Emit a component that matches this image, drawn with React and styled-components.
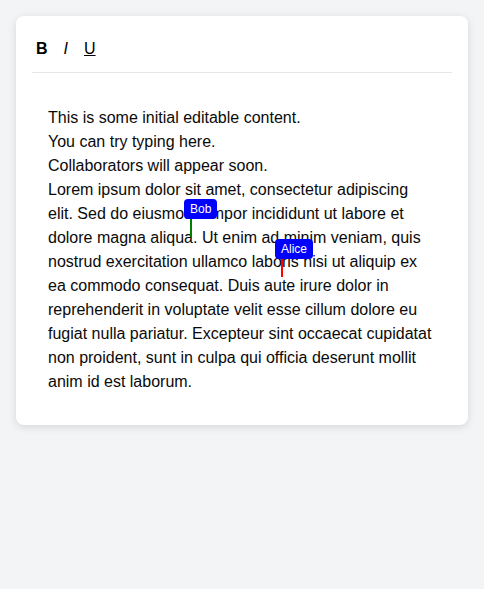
import React from 'react'
import styled, { createGlobalStyle } from 'styled-components'

const GlobalStyle = createGlobalStyle`
    body {
        margin: 0;
        background: #f3f4f6;
        font-family: "Liberation Sans", Arial, sans-serif;
    }
`

const cursors = [
    { name: 'Bob', color: 'green', left: 190, top: 219 },
    { name: 'Alice', color: 'red', left: 281, top: 259 },
]

function App() {
    return (
        <>
            <GlobalStyle />
            <Page>
                <Card>
                    <Toolbar>
                        <ToolButton><b>B</b></ToolButton>
                        <ToolButton><i>I</i></ToolButton>
                        <ToolButton><u>U</u></ToolButton>
                    </Toolbar>
                    <Editor contentEditable suppressContentEditableWarning>
                        This is some initial editable content.<br />
                        You can try typing here.<br />
                        Collaborators will appear soon.<br />
                        Lorem ipsum dolor sit amet, consectetur adipiscing elit. Sed do eiusmod tempor incididunt ut labore et dolore magna aliqua. Ut enim ad minim veniam, quis nostrud exercitation ullamco laboris nisi ut aliquip ex ea commodo consequat. Duis aute irure dolor in reprehenderit in voluptate velit esse cillum dolore eu fugiat nulla pariatur. Excepteur sint occaecat cupidatat non proident, sunt in culpa qui officia deserunt mollit anim id est laborum.
                    </Editor>
                </Card>
            </Page>
            {cursors.map((c) => (
                <Cursor key={c.name} color={c.color} style={{ left: c.left, top: c.top }}>
                    <Label>{c.name}</Label>
                </Cursor>
            ))}
        </>
    )
}

export default App

const Page = styled.div`
    padding: 16px;
`

const Card = styled.div`
    background: #fff;
    border-radius: 8px;
    box-shadow: 0 2px 8px rgba(0, 0, 0, 0.12);
    padding: 16px;
`

const Toolbar = styled.div`
    display: flex;
    gap: 8px;
    padding-top: 1px;
    padding-bottom: 7px;
    border-bottom: 1px solid #e5e7eb;
`

const ToolButton = styled.button`
    background: none;
    border: none;
    padding: 4px;
    height: 32px;
    font-family: inherit;
    font-size: 16px;
    color: #000;
    cursor: pointer;
`

const Editor = styled.div`
    margin-top: 16px;
    padding: 17px 16px 15px;
    font-size: 16px;
    line-height: 24px;
    color: #0a0a0a;
    outline: none;
`

const Cursor = styled.div`
    position: absolute;
    width: 2px;
    height: 18px;
    background: ${(p) => p.color};
    pointer-events: none;
`

const Label = styled.span`
    position: absolute;
    bottom: 100%;
    left: -6px;
    height: 20px;
    padding: 0 6px;
    border-radius: 4px;
    background: #0000ff;
    color: #fff;
    font-size: 12px;
    line-height: 20px;
    white-space: nowrap;
`
